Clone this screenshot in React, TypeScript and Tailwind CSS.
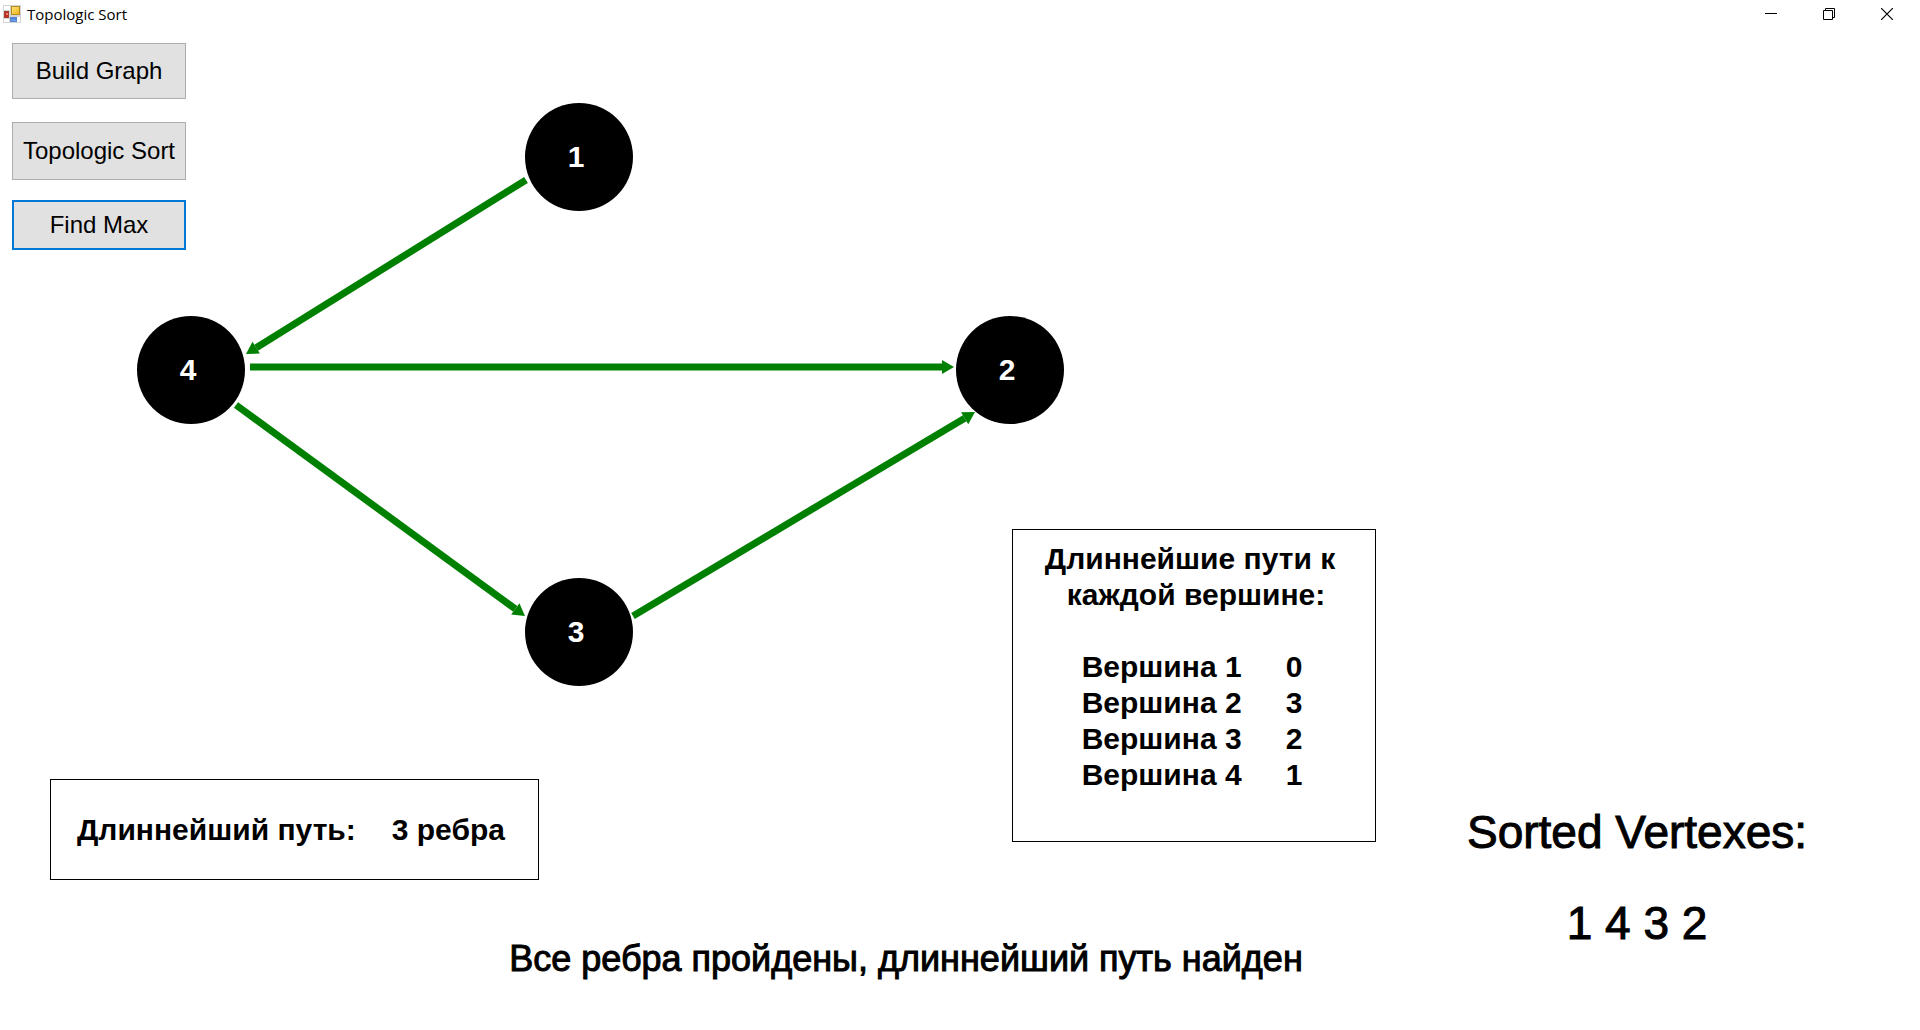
import React from "react";

type Vertex = { id: number; x: number; y: number; labelX: number };
type Edge = { from: [number, number]; to: [number, number] };

const RADIUS = 54;

const vertices: Vertex[] = [
  { id: 1, x: 579, y: 128, labelX: 576 },
  { id: 4, x: 191, y: 341, labelX: 188 },
  { id: 2, x: 1010, y: 341, labelX: 1007 },
  { id: 3, x: 579, y: 603, labelX: 576 },
];

const edges: Edge[] = [
  { from: [526, 151], to: [246, 325] },
  { from: [250, 338], to: [954, 338] },
  { from: [236, 376], to: [525, 587] },
  { from: [633, 587], to: [975, 383] },
];

const longestPaths = [
  { vertex: "Вершина 1", length: 0 },
  { vertex: "Вершина 2", length: 3 },
  { vertex: "Вершина 3", length: 2 },
  { vertex: "Вершина 4", length: 1 },
];

function Arrow({ from, to }: Edge) {
  const dx = to[0] - from[0];
  const dy = to[1] - from[1];
  const len = Math.hypot(dx, dy);
  const ux = dx / len;
  const uy = dy / len;
  const bx = to[0] - ux * 12;
  const by = to[1] - uy * 12;
  const head = [
    `${to[0]},${to[1]}`,
    `${bx - uy * 7},${by + ux * 7}`,
    `${bx + uy * 7},${by - ux * 7}`,
  ].join(" ");
  return (
    <g fill="#008000" stroke="#008000">
      <line x1={from[0]} y1={from[1]} x2={bx} y2={by} strokeWidth="7" />
      <polygon points={head} stroke="none" />
    </g>
  );
}

function Graph() {
  return (
    <svg
      className="pointer-events-none absolute top-0 left-0"
      width="1080"
      height="680"
      role="img"
      aria-label="Graph"
    >
      {edges.map((e, i) => (
        <Arrow key={i} {...e} />
      ))}
      {vertices.map((v) => (
        <g key={v.id}>
          <circle cx={v.x} cy={v.y} r={RADIUS} fill="#000" />
          <text
            x={v.labelX}
            y={v.y + 10}
            textAnchor="middle"
            fill="#fff"
            className="text-[30px] font-bold"
          >
            {v.id}
          </text>
        </g>
      ))}
    </svg>
  );
}

function FormIcon() {
  return (
    <svg width="18" height="18" viewBox="0 0 18 18" aria-hidden="true">
      <defs>
        <linearGradient id="yellow" x1="0" y1="0" x2="1" y2="1">
          <stop offset="0" stopColor="#ffe880" />
          <stop offset="1" stopColor="#eeb010" />
        </linearGradient>
        <linearGradient id="blue" x1="0" y1="0" x2="0" y2="1">
          <stop offset="0" stopColor="#3c78dc" />
          <stop offset="1" stopColor="#78aaf5" />
        </linearGradient>
      </defs>
      <rect width="18" height="18" fill="#d4d4d4" />
      <rect x="1" y="1" width="6" height="4" fill="#fff" />
      <rect x="1" y="14" width="5" height="3" fill="#fff" />
      <rect x="14" y="12" width="3" height="5" fill="#fff" />
      <rect x="8.5" y="1.5" width="8" height="8" fill="url(#yellow)" stroke="#b98a1c" />
      <rect x="1.5" y="6.5" width="4" height="6" fill="#c8281e" stroke="#a04038" />
      <rect x="3" y="8" width="2" height="2" fill="#e88078" />
      <rect x="7.5" y="12.5" width="6" height="4" fill="url(#blue)" stroke="#5a86c8" />
    </svg>
  );
}

function TitleBar() {
  const control = "flex h-full w-[58px] items-center justify-center hover:bg-gray-200";
  return (
    <header className="flex h-7 items-center justify-between pr-1 pl-[3px]">
      <div className="flex items-center gap-[6px]">
        <FormIcon />
        <h1 className="font-['Open_Sans',sans-serif] text-[15px] leading-5">Topologic Sort</h1>
      </div>
      <div className="flex h-full">
        <button type="button" aria-label="Minimize" className={control}>
          <svg width="12" height="12" viewBox="0 0 12 12" shapeRendering="crispEdges">
            <rect y="5" width="12" height="1" />
          </svg>
        </button>
        <button type="button" aria-label="Restore" className={control}>
          <svg width="12" height="12" viewBox="0 0 12 12" fill="none" stroke="#000">
            <path d="M.5 2.5h9v9h-9zM2.5 2.5v-2h9v9h-2" />
          </svg>
        </button>
        <button type="button" aria-label="Close" className={control}>
          <svg width="12" height="12" viewBox="0 0 12 12" stroke="#000" strokeWidth="1.2">
            <path d="M0 0l12 12M12 0L0 12" />
          </svg>
        </button>
      </div>
    </header>
  );
}

export default function App() {
  return (
    <div className="flex min-h-screen flex-col bg-white font-['Liberation_Sans',Arial,sans-serif] text-black">
      <TitleBar />
      <main className="relative mt-px flex grow flex-col">
        <Graph />
        <nav className="relative flex w-[198px] flex-col px-3 pt-[14px] text-[24px] leading-7">
          <button type="button" className="h-[56px] border border-[#adadad] bg-[#e1e1e1]">
            Build Graph
          </button>
          <button type="button" className="mt-[23px] h-[58px] border border-[#adadad] bg-[#e1e1e1] whitespace-nowrap">
            Topologic Sort
          </button>
          <button type="button" className="mt-5 h-[50px] border-2 border-[#0078d7] bg-[#e1e1e1]">
            Find Max
          </button>
        </nav>
        <div className="relative mt-[279px] grid grid-cols-[1012fr_364fr_544fr] items-start">
          <p className="mt-[250px] ml-[50px] flex h-[101px] w-[489px] items-center gap-9 border border-black pl-[26px] text-[30px] font-bold whitespace-nowrap">
            <span>Длиннейший путь:</span>
            <span>3 ребра</span>
          </p>
          <section className="flex h-[313px] flex-col items-center border border-black pt-[11px] text-[30px] leading-9 font-bold">
            <h2 className="mr-2 whitespace-nowrap">
              <span className="block">Длиннейшие пути к</span>
              <span className="block pl-[22px]">каждой вершине:</span>
            </h2>
            <table className="mr-1 mt-9">
              <tbody>
                {longestPaths.map((p) => (
                  <tr key={p.vertex}>
                    <th scope="row" className="p-0 text-left">{p.vertex}</th>
                    <td className="p-0 pl-11">{p.length}</td>
                  </tr>
                ))}
              </tbody>
            </table>
          </section>
          <section className="mt-[278px] ml-[90px] w-[342px] text-center text-[46px] leading-[50px] whitespace-nowrap [-webkit-text-stroke:1px_black]">
            <h2>Sorted Vertexes:</h2>
            <p className="mt-[41px]">1 4 3 2</p>
          </section>
        </div>
        <p role="status" className="relative -mt-[7px] mr-[108px] text-center text-[36px] leading-9 [-webkit-text-stroke:1px_black]">
          Все ребра пройдены, длиннейший путь найден
        </p>
      </main>
    </div>
  );
}
